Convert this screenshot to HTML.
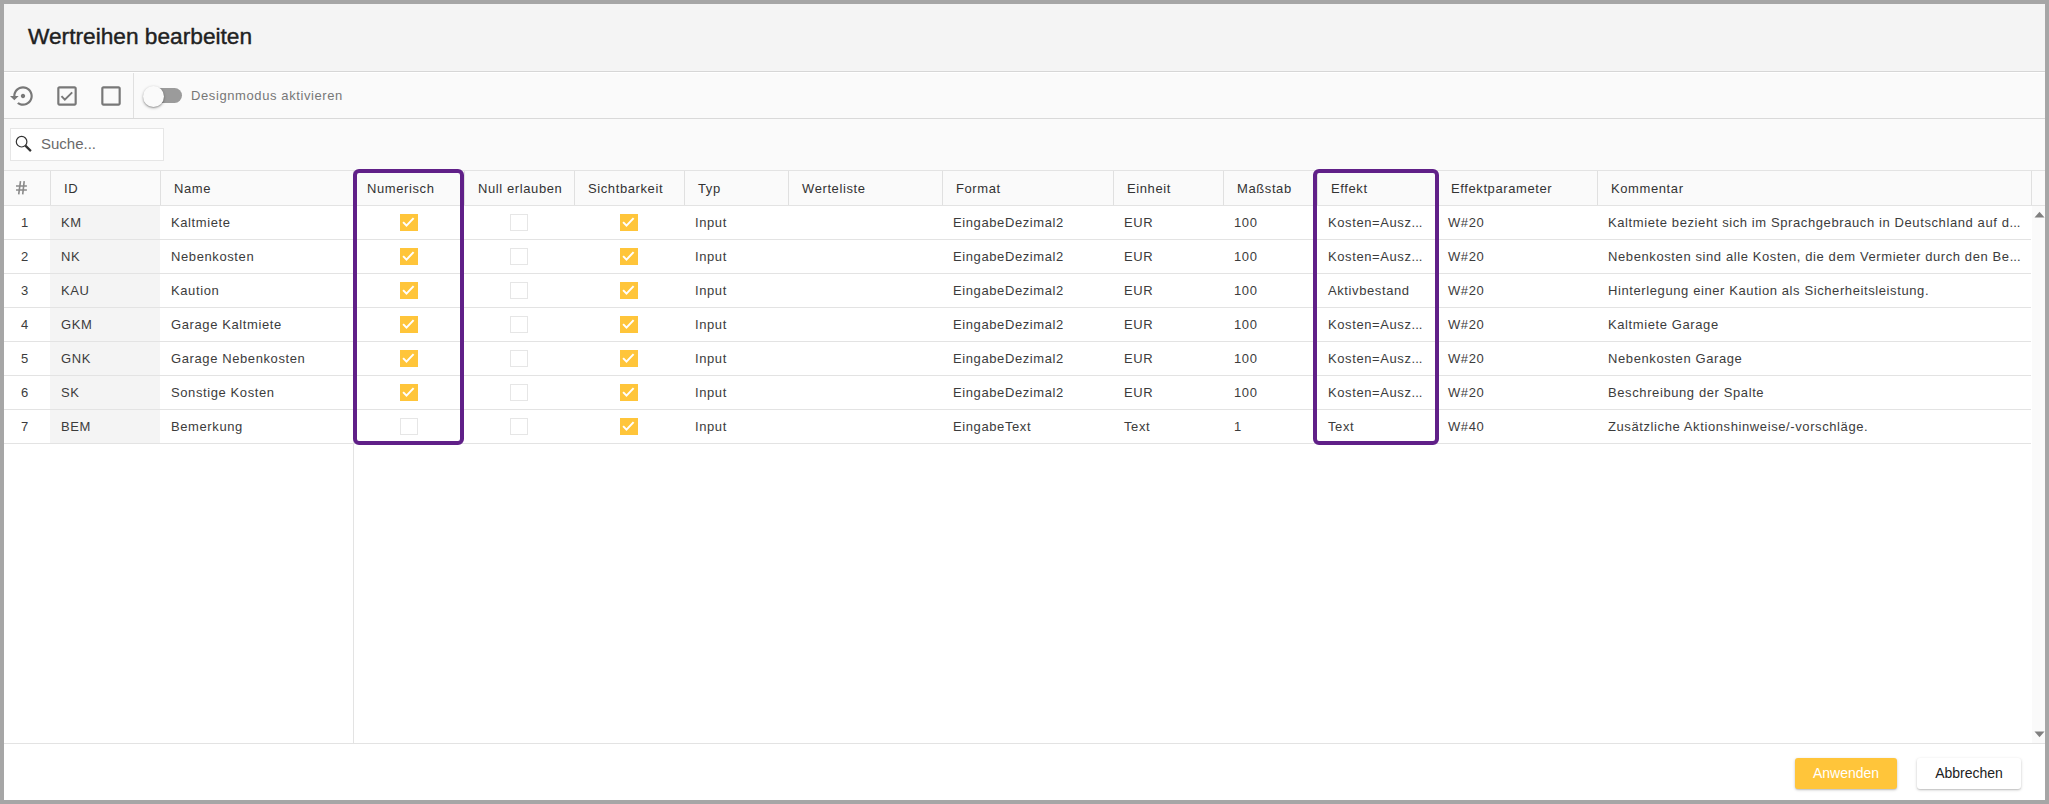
<!DOCTYPE html>
<html><head><meta charset="utf-8"><title>Wertreihen bearbeiten</title>
<style>
*{box-sizing:border-box}
html,body{margin:0;padding:0}
body{width:2049px;height:804px;position:relative;overflow:hidden;background:#a6a6a6;font-family:"Liberation Sans",sans-serif;}
.abs{position:absolute}
.dlg{position:absolute;left:4px;top:4px;width:2041px;height:796px;background:#fff;overflow:hidden}
.t{position:absolute;white-space:nowrap;font-size:13px;letter-spacing:0.6px;line-height:34px;height:34px}
.hl{position:absolute;height:1px}
.vl{position:absolute;width:1px}
.cb{position:absolute;width:18px;height:17px}
.cb.on{background:#ffc53a}
.cb.off{border:1px solid #e6e6e6;background:#fff}
.pur{position:absolute;border:4px solid #602088;border-radius:6px}
.btn{position:absolute;top:758px;height:31px;border-radius:3px;font-size:14px;line-height:31px;text-align:center;box-shadow:0 1px 3px rgba(0,0,0,.22),0 1px 1px rgba(0,0,0,.08)}
</style></head><body>

<div class="abs" style="left:4px;top:4px;width:2041px;height:796px;background:#fff"></div>
<div class="abs" style="left:4px;top:4px;width:2041px;height:67px;background:#f4f4f4"></div>
<div class="hl" style="left:4px;top:71px;width:2041px;background:#d6d6d6"></div>
<div class="abs" style="left:28px;top:3px;height:67px;line-height:67px;font-size:22.7px;color:#212121;white-space:nowrap;letter-spacing:0px;-webkit-text-stroke:0.4px #212121">Wertreihen bearbeiten</div>
<div class="abs" style="left:4px;top:72px;width:2041px;height:98px;background:#fafafa"></div>
<div class="hl" style="left:4px;top:72px;width:2041px;background:#ffffff"></div>
<div class="hl" style="left:4px;top:118px;width:2041px;background:#d9d9d9"></div>
<div class="vl" style="left:133px;top:73px;height:45px;background:#e0e0e0"></div>
<svg class="abs" style="left:10px;top:83px" width="26" height="26" viewBox="0 0 24 24"><path fill="#787878" d="M14 12c0-1.1-.9-2-2-2s-2 .9-2 2 .9 2 2 2 2-.9 2-2zm-2-9c-4.97 0-9 4.03-9 9H0l4 4 4-4H5c0-3.87 3.13-7 7-7s7 3.13 7 7-3.13 7-7 7c-1.51 0-2.91-.49-4.06-1.3l-1.42 1.44C8.04 20.3 9.94 21 12 21c4.97 0 9-4.03 9-9s-4.03-9-9-9z"/></svg>
<svg class="abs" style="left:54px;top:83px" width="26" height="26" viewBox="0 0 24 24"><path fill="#787878" d="M19 3H5c-1.11 0-2 .9-2 2v14c0 1.1.89 2 2 2h14c1.11 0 2-.9 2-2V5c0-1.1-.89-2-2-2zm0 16H5V5h14v14z"/><path fill="none" stroke="#787878" stroke-width="1.8" d="M6.9 12.1l3.1 3.3 6.8-6.8"/></svg>
<svg class="abs" style="left:98px;top:83px" width="26" height="26" viewBox="0 0 24 24"><path fill="#787878" d="M19 3H5c-1.11 0-2 .9-2 2v14c0 1.1.89 2 2 2h14c1.11 0 2-.9 2-2V5c0-1.1-.89-2-2-2zm0 16H5V5h14v14z"/></svg>
<div class="abs" style="left:148px;top:88px;width:34px;height:15px;border-radius:7.5px;background:#9b9b9b"></div>
<div class="abs" style="left:143px;top:85.5px;width:21px;height:21px;border-radius:50%;background:#fafafa;box-shadow:0 1px 3px rgba(0,0,0,.35),0 1px 1px rgba(0,0,0,.14)"></div>
<div class="abs" style="left:191px;top:79px;height:34px;line-height:34px;font-size:13px;letter-spacing:0.6px;color:#777;white-space:nowrap">Designmodus aktivieren</div>
<div class="abs" style="left:10px;top:128px;width:154px;height:33px;border:1px solid #e6e6e6;background:#fff"></div>
<svg class="abs" style="left:14px;top:134px" width="20" height="20" viewBox="0 0 20 20"><circle cx="7.6" cy="7.7" r="5.3" fill="none" stroke="#333" stroke-width="1.2"/><path d="M11.4 11.6l5.5 5.5" stroke="#333" stroke-width="2.2" stroke-linecap="butt"/></svg>
<div class="abs" style="left:41px;top:127px;height:33px;line-height:33px;font-size:15px;letter-spacing:0px;color:#6a6a6a;white-space:nowrap">Suche...</div>
<div class="abs" style="left:4px;top:171px;width:2041px;height:34px;background:#fafafa"></div>
<div class="hl" style="left:4px;top:170px;width:2041px;background:#e3e3e3"></div>
<div class="hl" style="left:4px;top:205px;width:2041px;background:#e3e3e3"></div>
<div class="vl" style="left:50px;top:171px;height:34px;background:#e0e0e0"></div>
<div class="vl" style="left:160px;top:171px;height:34px;background:#e0e0e0"></div>
<div class="vl" style="left:353px;top:171px;height:34px;background:#e0e0e0"></div>
<div class="vl" style="left:464px;top:171px;height:34px;background:#e0e0e0"></div>
<div class="vl" style="left:574px;top:171px;height:34px;background:#e0e0e0"></div>
<div class="vl" style="left:684px;top:171px;height:34px;background:#e0e0e0"></div>
<div class="vl" style="left:788px;top:171px;height:34px;background:#e0e0e0"></div>
<div class="vl" style="left:942px;top:171px;height:34px;background:#e0e0e0"></div>
<div class="vl" style="left:1113px;top:171px;height:34px;background:#e0e0e0"></div>
<div class="vl" style="left:1223px;top:171px;height:34px;background:#e0e0e0"></div>
<div class="vl" style="left:1317px;top:171px;height:34px;background:#e0e0e0"></div>
<div class="vl" style="left:1437px;top:171px;height:34px;background:#e0e0e0"></div>
<div class="vl" style="left:1597px;top:171px;height:34px;background:#e0e0e0"></div>
<div class="vl" style="left:2031px;top:171px;height:34px;background:#e0e0e0"></div>
<svg class="abs" style="left:14px;top:179px" width="16" height="18" viewBox="0 0 16 18"><path d="M2 6.95h10.9M2 10.95h10.9M6.5 2.2L4.7 15.4M10.2 2.2L8.7 15.4" stroke="#8a8a8a" stroke-width="1.6" fill="none"/></svg>
<div class="t" style="left:64px;top:172px;color:#333333">ID</div>
<div class="t" style="left:174px;top:172px;color:#333333">Name</div>
<div class="t" style="left:367px;top:172px;color:#333333">Numerisch</div>
<div class="t" style="left:478px;top:172px;color:#333333">Null erlauben</div>
<div class="t" style="left:588px;top:172px;color:#333333">Sichtbarkeit</div>
<div class="t" style="left:698px;top:172px;color:#333333">Typ</div>
<div class="t" style="left:802px;top:172px;color:#333333">Werteliste</div>
<div class="t" style="left:956px;top:172px;color:#333333">Format</div>
<div class="t" style="left:1127px;top:172px;color:#333333">Einheit</div>
<div class="t" style="left:1237px;top:172px;color:#333333">Maßstab</div>
<div class="t" style="left:1331px;top:172px;color:#333333">Effekt</div>
<div class="t" style="left:1451px;top:172px;color:#333333">Effektparameter</div>
<div class="t" style="left:1611px;top:172px;color:#333333">Kommentar</div>
<div class="abs" style="left:50px;top:206px;width:110px;height:33px;background:#f4f4f4"></div>
<div class="hl" style="left:4px;top:239px;width:2027px;background:#e3e3e3"></div>
<div class="t" style="left:21px;top:206px;color:#3c3c3c">1</div>
<div class="t" style="left:61px;top:206px;color:#3c3c3c">KM</div>
<div class="t" style="left:171px;top:206px;color:#3c3c3c">Kaltmiete</div>
<svg class="cb on" style="left:400px;top:214px" viewBox="0 0 18 17"><path d="M3.1 8.1l3.4 3.5 7.1-7.5" fill="none" stroke="#fff" stroke-width="2"/></svg>
<div class="cb off" style="left:510px;top:214px"></div>
<svg class="cb on" style="left:620px;top:214px" viewBox="0 0 18 17"><path d="M3.1 8.1l3.4 3.5 7.1-7.5" fill="none" stroke="#fff" stroke-width="2"/></svg>
<div class="t" style="left:695px;top:206px;color:#3c3c3c">Input</div>
<div class="t" style="left:953px;top:206px;color:#3c3c3c">EingabeDezimal2</div>
<div class="t" style="left:1124px;top:206px;color:#3c3c3c">EUR</div>
<div class="t" style="left:1234px;top:206px;color:#3c3c3c">100</div>
<div class="t" style="left:1328px;top:206px;color:#3c3c3c">Kosten=Ausz<span style="letter-spacing:0">...</span></div>
<div class="t" style="left:1448px;top:206px;color:#3c3c3c">W#20</div>
<div class="t" style="left:1608px;top:206px;color:#3c3c3c">Kaltmiete bezieht sich im Sprachgebrauch in Deutschland auf d<span style="letter-spacing:0">...</span></div>
<div class="abs" style="left:50px;top:240px;width:110px;height:33px;background:#f4f4f4"></div>
<div class="hl" style="left:4px;top:273px;width:2027px;background:#e3e3e3"></div>
<div class="t" style="left:21px;top:240px;color:#3c3c3c">2</div>
<div class="t" style="left:61px;top:240px;color:#3c3c3c">NK</div>
<div class="t" style="left:171px;top:240px;color:#3c3c3c">Nebenkosten</div>
<svg class="cb on" style="left:400px;top:248px" viewBox="0 0 18 17"><path d="M3.1 8.1l3.4 3.5 7.1-7.5" fill="none" stroke="#fff" stroke-width="2"/></svg>
<div class="cb off" style="left:510px;top:248px"></div>
<svg class="cb on" style="left:620px;top:248px" viewBox="0 0 18 17"><path d="M3.1 8.1l3.4 3.5 7.1-7.5" fill="none" stroke="#fff" stroke-width="2"/></svg>
<div class="t" style="left:695px;top:240px;color:#3c3c3c">Input</div>
<div class="t" style="left:953px;top:240px;color:#3c3c3c">EingabeDezimal2</div>
<div class="t" style="left:1124px;top:240px;color:#3c3c3c">EUR</div>
<div class="t" style="left:1234px;top:240px;color:#3c3c3c">100</div>
<div class="t" style="left:1328px;top:240px;color:#3c3c3c">Kosten=Ausz<span style="letter-spacing:0">...</span></div>
<div class="t" style="left:1448px;top:240px;color:#3c3c3c">W#20</div>
<div class="t" style="left:1608px;top:240px;color:#3c3c3c">Nebenkosten sind alle Kosten, die dem Vermieter durch den Be<span style="letter-spacing:0">...</span></div>
<div class="abs" style="left:50px;top:274px;width:110px;height:33px;background:#f4f4f4"></div>
<div class="hl" style="left:4px;top:307px;width:2027px;background:#e3e3e3"></div>
<div class="t" style="left:21px;top:274px;color:#3c3c3c">3</div>
<div class="t" style="left:61px;top:274px;color:#3c3c3c">KAU</div>
<div class="t" style="left:171px;top:274px;color:#3c3c3c">Kaution</div>
<svg class="cb on" style="left:400px;top:282px" viewBox="0 0 18 17"><path d="M3.1 8.1l3.4 3.5 7.1-7.5" fill="none" stroke="#fff" stroke-width="2"/></svg>
<div class="cb off" style="left:510px;top:282px"></div>
<svg class="cb on" style="left:620px;top:282px" viewBox="0 0 18 17"><path d="M3.1 8.1l3.4 3.5 7.1-7.5" fill="none" stroke="#fff" stroke-width="2"/></svg>
<div class="t" style="left:695px;top:274px;color:#3c3c3c">Input</div>
<div class="t" style="left:953px;top:274px;color:#3c3c3c">EingabeDezimal2</div>
<div class="t" style="left:1124px;top:274px;color:#3c3c3c">EUR</div>
<div class="t" style="left:1234px;top:274px;color:#3c3c3c">100</div>
<div class="t" style="left:1328px;top:274px;color:#3c3c3c">Aktivbestand</div>
<div class="t" style="left:1448px;top:274px;color:#3c3c3c">W#20</div>
<div class="t" style="left:1608px;top:274px;color:#3c3c3c">Hinterlegung einer Kaution als Sicherheitsleistung.</div>
<div class="abs" style="left:50px;top:308px;width:110px;height:33px;background:#f4f4f4"></div>
<div class="hl" style="left:4px;top:341px;width:2027px;background:#e3e3e3"></div>
<div class="t" style="left:21px;top:308px;color:#3c3c3c">4</div>
<div class="t" style="left:61px;top:308px;color:#3c3c3c">GKM</div>
<div class="t" style="left:171px;top:308px;color:#3c3c3c">Garage Kaltmiete</div>
<svg class="cb on" style="left:400px;top:316px" viewBox="0 0 18 17"><path d="M3.1 8.1l3.4 3.5 7.1-7.5" fill="none" stroke="#fff" stroke-width="2"/></svg>
<div class="cb off" style="left:510px;top:316px"></div>
<svg class="cb on" style="left:620px;top:316px" viewBox="0 0 18 17"><path d="M3.1 8.1l3.4 3.5 7.1-7.5" fill="none" stroke="#fff" stroke-width="2"/></svg>
<div class="t" style="left:695px;top:308px;color:#3c3c3c">Input</div>
<div class="t" style="left:953px;top:308px;color:#3c3c3c">EingabeDezimal2</div>
<div class="t" style="left:1124px;top:308px;color:#3c3c3c">EUR</div>
<div class="t" style="left:1234px;top:308px;color:#3c3c3c">100</div>
<div class="t" style="left:1328px;top:308px;color:#3c3c3c">Kosten=Ausz<span style="letter-spacing:0">...</span></div>
<div class="t" style="left:1448px;top:308px;color:#3c3c3c">W#20</div>
<div class="t" style="left:1608px;top:308px;color:#3c3c3c">Kaltmiete Garage</div>
<div class="abs" style="left:50px;top:342px;width:110px;height:33px;background:#f4f4f4"></div>
<div class="hl" style="left:4px;top:375px;width:2027px;background:#e3e3e3"></div>
<div class="t" style="left:21px;top:342px;color:#3c3c3c">5</div>
<div class="t" style="left:61px;top:342px;color:#3c3c3c">GNK</div>
<div class="t" style="left:171px;top:342px;color:#3c3c3c">Garage Nebenkosten</div>
<svg class="cb on" style="left:400px;top:350px" viewBox="0 0 18 17"><path d="M3.1 8.1l3.4 3.5 7.1-7.5" fill="none" stroke="#fff" stroke-width="2"/></svg>
<div class="cb off" style="left:510px;top:350px"></div>
<svg class="cb on" style="left:620px;top:350px" viewBox="0 0 18 17"><path d="M3.1 8.1l3.4 3.5 7.1-7.5" fill="none" stroke="#fff" stroke-width="2"/></svg>
<div class="t" style="left:695px;top:342px;color:#3c3c3c">Input</div>
<div class="t" style="left:953px;top:342px;color:#3c3c3c">EingabeDezimal2</div>
<div class="t" style="left:1124px;top:342px;color:#3c3c3c">EUR</div>
<div class="t" style="left:1234px;top:342px;color:#3c3c3c">100</div>
<div class="t" style="left:1328px;top:342px;color:#3c3c3c">Kosten=Ausz<span style="letter-spacing:0">...</span></div>
<div class="t" style="left:1448px;top:342px;color:#3c3c3c">W#20</div>
<div class="t" style="left:1608px;top:342px;color:#3c3c3c">Nebenkosten Garage</div>
<div class="abs" style="left:50px;top:376px;width:110px;height:33px;background:#f4f4f4"></div>
<div class="hl" style="left:4px;top:409px;width:2027px;background:#e3e3e3"></div>
<div class="t" style="left:21px;top:376px;color:#3c3c3c">6</div>
<div class="t" style="left:61px;top:376px;color:#3c3c3c">SK</div>
<div class="t" style="left:171px;top:376px;color:#3c3c3c">Sonstige Kosten</div>
<svg class="cb on" style="left:400px;top:384px" viewBox="0 0 18 17"><path d="M3.1 8.1l3.4 3.5 7.1-7.5" fill="none" stroke="#fff" stroke-width="2"/></svg>
<div class="cb off" style="left:510px;top:384px"></div>
<svg class="cb on" style="left:620px;top:384px" viewBox="0 0 18 17"><path d="M3.1 8.1l3.4 3.5 7.1-7.5" fill="none" stroke="#fff" stroke-width="2"/></svg>
<div class="t" style="left:695px;top:376px;color:#3c3c3c">Input</div>
<div class="t" style="left:953px;top:376px;color:#3c3c3c">EingabeDezimal2</div>
<div class="t" style="left:1124px;top:376px;color:#3c3c3c">EUR</div>
<div class="t" style="left:1234px;top:376px;color:#3c3c3c">100</div>
<div class="t" style="left:1328px;top:376px;color:#3c3c3c">Kosten=Ausz<span style="letter-spacing:0">...</span></div>
<div class="t" style="left:1448px;top:376px;color:#3c3c3c">W#20</div>
<div class="t" style="left:1608px;top:376px;color:#3c3c3c">Beschreibung der Spalte</div>
<div class="abs" style="left:50px;top:410px;width:110px;height:33px;background:#f4f4f4"></div>
<div class="hl" style="left:4px;top:443px;width:2027px;background:#e3e3e3"></div>
<div class="t" style="left:21px;top:410px;color:#3c3c3c">7</div>
<div class="t" style="left:61px;top:410px;color:#3c3c3c">BEM</div>
<div class="t" style="left:171px;top:410px;color:#3c3c3c">Bemerkung</div>
<div class="cb off" style="left:400px;top:418px"></div>
<div class="cb off" style="left:510px;top:418px"></div>
<svg class="cb on" style="left:620px;top:418px" viewBox="0 0 18 17"><path d="M3.1 8.1l3.4 3.5 7.1-7.5" fill="none" stroke="#fff" stroke-width="2"/></svg>
<div class="t" style="left:695px;top:410px;color:#3c3c3c">Input</div>
<div class="t" style="left:953px;top:410px;color:#3c3c3c">EingabeText</div>
<div class="t" style="left:1124px;top:410px;color:#3c3c3c">Text</div>
<div class="t" style="left:1234px;top:410px;color:#3c3c3c">1</div>
<div class="t" style="left:1328px;top:410px;color:#3c3c3c">Text</div>
<div class="t" style="left:1448px;top:410px;color:#3c3c3c">W#40</div>
<div class="t" style="left:1608px;top:410px;color:#3c3c3c">Zusätzliche Aktionshinweise/-vorschläge.</div>
<div class="vl" style="left:353px;top:206px;height:537px;background:#e3e3e3"></div>
<div class="abs" style="left:2032px;top:206px;width:13px;height:537px;background:#fafafa"></div>
<svg class="abs" style="left:2034px;top:211px" width="11" height="7" viewBox="0 0 11 7"><path d="M0.5 6.5L5.5 0.8 10.5 6.5z" fill="#808080"/></svg>
<svg class="abs" style="left:2034px;top:731px" width="11" height="7" viewBox="0 0 11 7"><path d="M0.5 0.5L5.5 6.2 10.5 0.5z" fill="#808080"/></svg>
<div class="pur" style="left:353px;top:169px;width:111px;height:276px"></div>
<div class="pur" style="left:1313px;top:169px;width:126px;height:276px"></div>
<div class="hl" style="left:4px;top:743px;width:2041px;background:#e3e3e3"></div>
<div class="btn" style="left:1795px;width:102px;background:#ffc53a;color:#fff">Anwenden</div>
<div class="btn" style="left:1917px;width:104px;background:#fff;color:#212121">Abbrechen</div>
</body></html>
